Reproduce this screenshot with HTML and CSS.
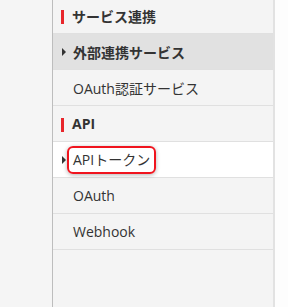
FILE: index.html
```html
<!DOCTYPE html>
<html lang="ja">
<head>
    <meta charset="UTF-8">
    <meta name="viewport" content="width=device-width, initial-scale=1.0">
    <title>メニュー</title>
    <link rel="stylesheet" href="styles.css">
</head>
<body>
    <div class="layout">
        <div class="gutter"></div>
        <nav class="side-menu">
            <div class="menu-row menu-heading">サービス連携</div>
            <div class="menu-row menu-group">外部連携サービス</div>
            <div class="menu-row">OAuth認証サービス</div>
            <div class="menu-row menu-heading">API</div>
            <div class="menu-row menu-item-active"><span class="highlight">APIトークン</span></div>
            <div class="menu-row">OAuth</div>
            <div class="menu-row">Webhook</div>
        </nav>
        <div class="filler"></div>
    </div>
</body>
</html>
```
FILE: styles.css
```css
html, body {
    margin: 0;
    height: 100%;
}

body {
    font-family: "Open Sans", "Noto Sans CJK JP", sans-serif;
    font-size: 14px;
    color: #333;
    background-color: #f5f5f5;
}

.layout {
    display: flex;
    height: 100%;
    overflow: hidden;
}

.gutter {
    width: 52px;
    flex-shrink: 0;
    background-color: #f5f5f5;
    border-right: 1px solid #bdbdbd;
}

.side-menu {
    width: 220px;
    flex-shrink: 0;
    background-color: #f4f4f4;
    border-right: 2px solid #e2e2e2;
    margin-top: -2px;
}

.filler {
    flex: 1;
    background-color: #fdfdfd;
}

.menu-row {
    position: relative;
    height: 35px;
    display: flex;
    align-items: center;
    padding-left: 20px;
    border-bottom: 1px solid #e0e0e0;
}

.menu-heading {
    font-weight: bold;
    padding-left: 19px;
}

.menu-heading:before {
    content: '';
    position: absolute;
    left: 8px;
    top: 12px;
    width: 3px;
    height: 14px;
    background-color: #e8262b;
}

.menu-group {
    background-color: #e1e1e1;
    font-weight: bold;
}

.menu-group:before,
.menu-item-active:before {
    content: '';
    position: absolute;
    left: 9px;
    top: 14px;
    border-top: 4px solid transparent;
    border-bottom: 4px solid transparent;
    border-left: 4px solid #333;
}

.menu-item-active {
    background-color: #fff;
}

.highlight {
    margin-left: -6px;
    padding: 3px 4px;
    border: 2px solid #f0141e;
    border-radius: 6px;
    box-shadow: 0 1px 4px rgba(0, 0, 0, 0.3);
    line-height: 18px;
}
```
